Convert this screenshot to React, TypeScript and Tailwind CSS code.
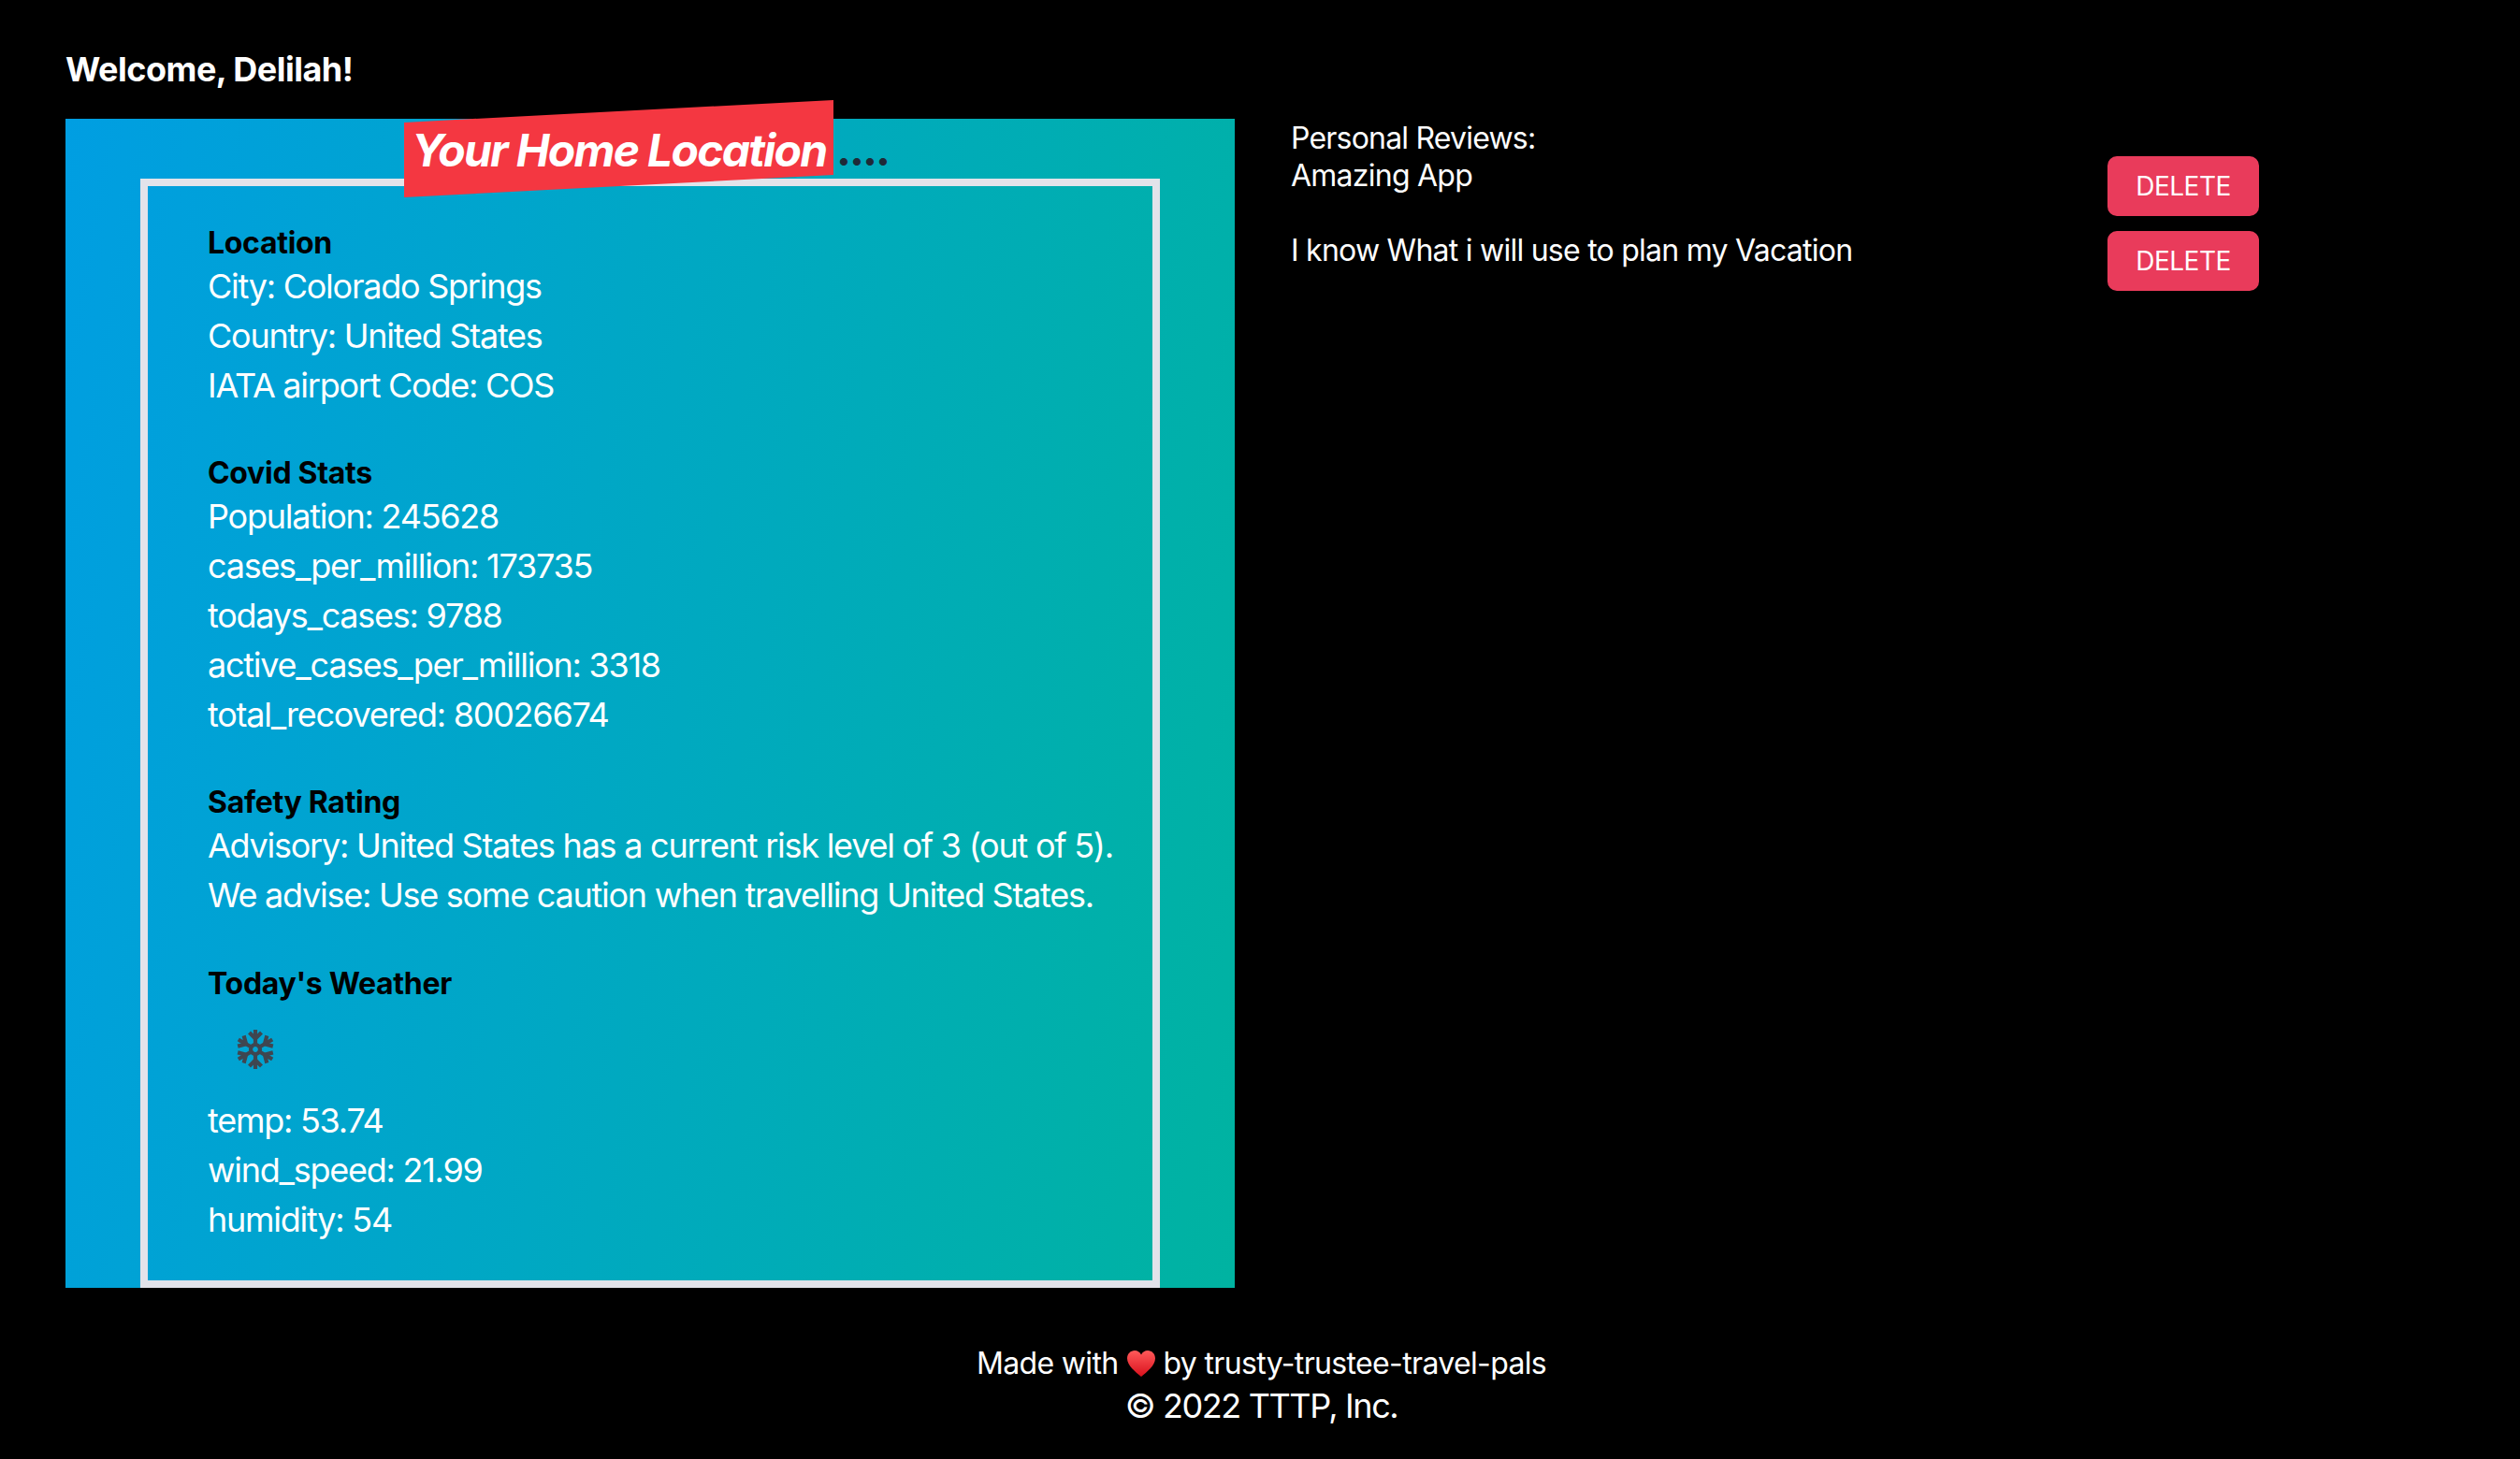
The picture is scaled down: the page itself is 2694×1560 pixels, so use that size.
function Heading({ children }: { children: string }) {
  return <h3 className="text-[32px] leading-[40px] font-bold tracking-[-0.3px] text-black">{children}</h3>
}

function Line({ children }: { children: string }) {
  return <p className="text-[36px] leading-[53px] tracking-[-1.25px] whitespace-nowrap text-white">{children}</p>
}

function Review({ text, className }: { text: string; className?: string }) {
  return (
    <div className={`flex items-start justify-between ${className ?? ''}`}>
      <p className="pt-[1px] text-[32px] leading-[40px] tracking-[-0.75px] text-white">{text}</p>
      <button className="w-[162px] h-[64px] rounded-[10px] bg-[#e93b5b] text-[28px] tracking-[-0.5px] text-white">
        DELETE
      </button>
    </div>
  )
}

function SnowIcon() {
  return (
    <svg viewBox="-22 -22 44 44" className="w-[44px] h-[44px]" fill="none" stroke="#3f4650" strokeWidth={4.2}>
      <circle cx="0" cy="0" r="5" />
      {[0, 60, 120, 180, 240, 300].map((deg) => (
        <g key={deg} transform={`rotate(${deg})`}>
          <path d="M0 -5V-21" />
          <path d="M-6.500 -18L0 -11.500L6.500 -18" />
        </g>
      ))}
    </svg>
  )
}

export default function App() {
  return (
    <div className="min-h-[1560px] bg-black text-white font-['Inter',sans-serif] flex flex-col">
      <h1 className="ml-[70px] mt-[52px] text-[36px] leading-[44px] font-bold tracking-[-0.5px]">Welcome, Delilah!</h1>

      <div className="flex mt-[31px] ml-[70px]">
        <section className="relative w-[1250px] h-[1250px] pt-[64px] bg-[linear-gradient(100deg,#009ee2,#00b3a1)]">
          <h2 className="absolute left-[362px] top-[-20px] flex items-center whitespace-nowrap">
            <span className="w-[459px] h-[104px] flex items-center pl-[8px] pt-[3px] bg-[#f43741] text-[48px] font-bold italic tracking-[-1.7px] [clip-path:polygon(0_23%,100%_0,100%_77%,0_100%)]">
              Your Home Location
            </span>
            <span className="ml-[3px] mt-[2px] text-[48px] font-bold tracking-[-2px] text-[#1f2937]">....</span>
          </h2>
          <div className="mx-[80px] h-[1186px] border-8 border-[#e2e3ea] pt-[41px] pl-[64px]">
            <Heading>Location</Heading>
            <Line>City: Colorado Springs</Line>
            <Line>Country: United States</Line>
            <Line>IATA airport Code: COS</Line>

            <div className="mt-[47px]">
              <Heading>Covid Stats</Heading>
              <Line>Population: 245628</Line>
              <Line>cases_per_million: 173735</Line>
              <Line>todays_cases: 9788</Line>
              <Line>active_cases_per_million: 3318</Line>
              <Line>total_recovered: 80026674</Line>
            </div>

            <div className="mt-[47px]">
              <Heading>Safety Rating</Heading>
              <Line>Advisory: United States has a current risk level of 3 (out of 5).</Line>
              <Line>We advise: Use some caution when travelling United States.</Line>
            </div>

            <div className="mt-[48px]">
              <Heading>Today's Weather</Heading>
              <div className="h-[100px] flex items-center pl-[29px]">
                <SnowIcon />
              </div>
              <Line>temp: 53.74</Line>
              <Line>wind_speed: 21.99</Line>
              <Line>humidity: 54</Line>
            </div>
          </div>
        </section>

        <aside className="ml-[60px] w-[1035px]">
          <p className="pt-[1px] text-[32px] leading-[39px] tracking-[-0.8px]">Personal Reviews:</p>
          <Review text="Amazing App" />
          <Review text="I know What i will use to plan my Vacation" className="mt-[16px]" />
        </aside>
      </div>

      <footer className="mt-[58px] pl-[3px] text-center">
        <p className="text-[32px] leading-[45px] tracking-[-0.65px] flex items-center justify-center">
          Made with
          <svg viewBox="0 0 32 30" className="w-[32px] h-[30px] mx-[8px]">
            <defs>
              <linearGradient id="heart" x1="0" y1="0" x2="0" y2="1">
                <stop offset="0" stopColor="#ff5a5a" />
                <stop offset="1" stopColor="#d9101c" />
              </linearGradient>
            </defs>
            <path
              d="M16 29C10 24 1 17 1 9.500C1 4.500 4.800 1 9 1C12 1 14.600 2.600 16 5.500C17.400 2.600 20 1 23 1C27.200 1 31 4.500 31 9.500C31 17 22 24 16 29Z"
              fill="url(#heart)"
            />
          </svg>
          by trusty-trustee-travel-pals
        </p>
        <p className="text-[36px] leading-[46px] tracking-[-1.4px]">© 2022 TTTP, Inc.</p>
      </footer>
    </div>
  )
}
